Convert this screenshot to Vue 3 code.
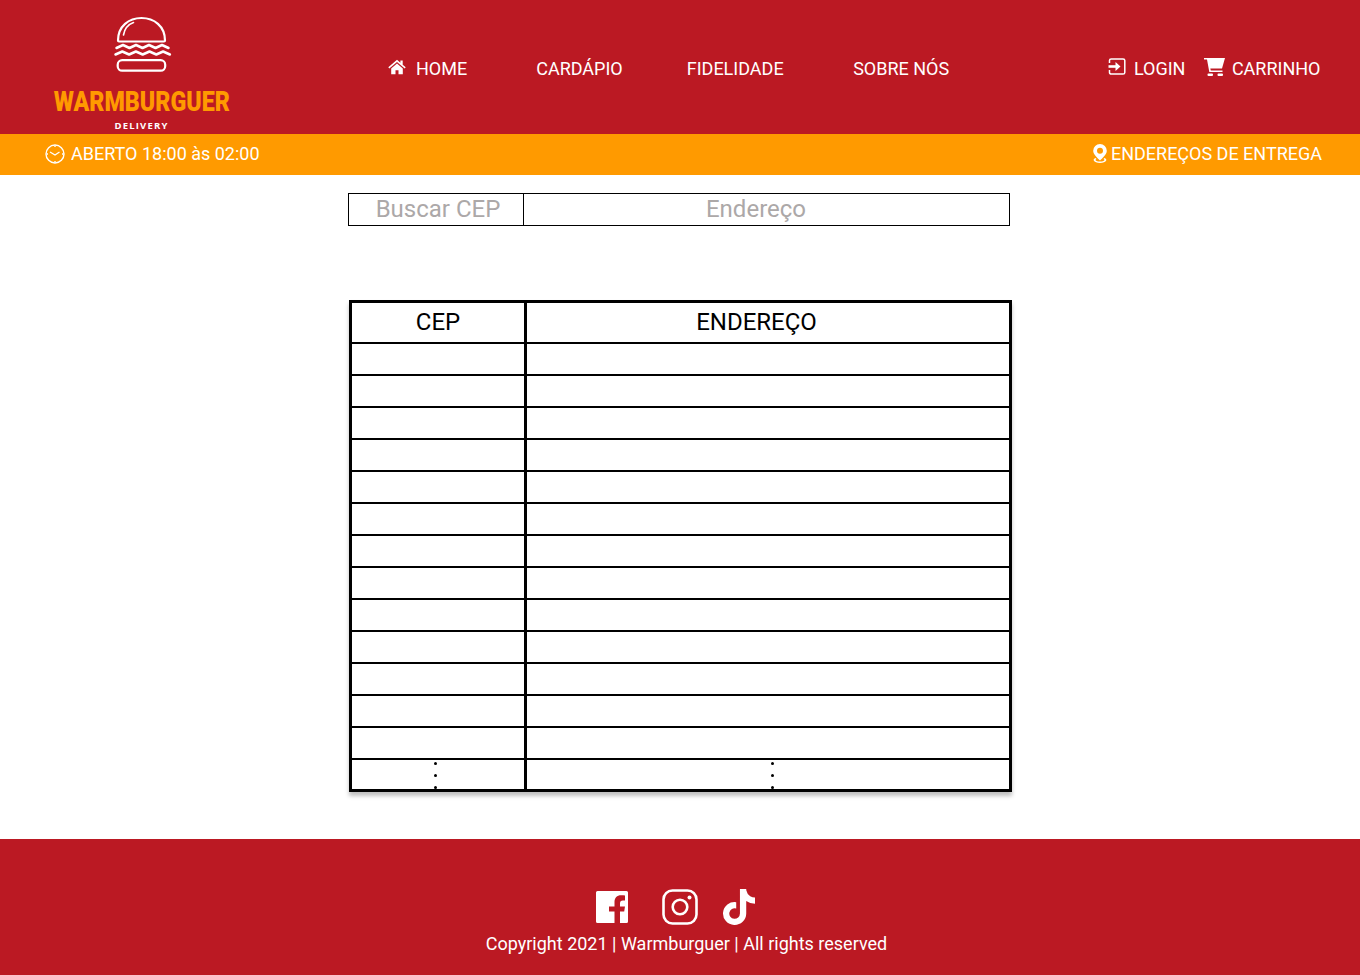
<template>
  <div class="page">
    <header class="topbar">
      <div class="logo">
        <svg class="burger" width="60" height="60" viewBox="0 0 60 60" fill="none" stroke="#fff" stroke-width="2.2">
          <path d="M5 25.5C5 11 16 3 28.5 3S52 11 52 25.5c0 .8-.5 1-1 1H6c-.5 0-1-.2-1-1z" />
          <path d="M10.500 20C11.500 14 15 9.500 20.500 7.500" stroke-width="1.6" stroke-linecap="round" />
          <path d="M3.500 33l6.500-3 6.500 3 6.500-3 6.500 3 6.500-3 6.500 3 6.500-3 6.500 3" stroke-width="2.500" stroke-linecap="round" stroke-linejoin="round" />
          <path d="M2.500 39.500l6.800-3 6.800 3 6.800-3 6.800 3 6.800-3 6.800 3 6.800-3 6.800 3" stroke-width="2.500" stroke-linecap="round" stroke-linejoin="round" />
          <rect x="4.700" y="45.200" width="47.500" height="10.500" rx="4.500" />
        </svg>
        <span class="brand">WARMBURGUER</span>
        <span class="delivery">DELIVERY</span>
      </div>

      <nav class="menu">
        <a class="link home">
          <svg width="18" height="16" viewBox="0 0 18 16" fill="#fff">
            <path d="M9 .8L.3 8.300l1 1.100L9 2.900l7.700 6.500 1-1.100-3-2.600V1.500h-2.300v2.300z" />
            <path d="M3.200 9.500L9 4.600l5.800 4.900v5.700h-4.300v-4h-3v4H3.200z" />
          </svg>
          HOME
        </a>
        <a class="link cardapio">CARDÁPIO</a>
        <a class="link fidelidade">FIDELIDADE</a>
        <a class="link sobre">SOBRE NÓS</a>
      </nav>

      <div class="account">
        <a class="link login">
          <svg width="18" height="17" viewBox="0 0 18 17" fill="none" stroke="#fff" stroke-width="1.500">
            <path d="M1.500 5V2.500C1.500 1.500 2.200 1 3.200 1h11.800c1 0 1.800.6 1.800 1.600v11.800c0 1-.8 1.600-1.800 1.600H3.200c-1 0-1.700-.5-1.700-1.500V12" />
            <path d="M.5 8.500h8" stroke-width="2.600" />
            <path d="M7.500 4l5 4.500-5 4.500z" fill="#fff" stroke="none" />
          </svg>
          LOGIN
        </a>
        <a class="link cart">
          <svg width="21" height="18" viewBox="0 0 21 18" fill="#fff">
            <path d="M0 0h21l-3 10.500H6.300l.5 2H18.500V14H5.300L3 1.500H0z" />
            <rect x="3.500" y="15.500" width="5.500" height="2.500" rx="1" />
            <rect x="13.500" y="15.500" width="5.500" height="2.500" rx="1" />
          </svg>
          CARRINHO
        </a>
      </div>
    </header>

    <div class="infobar">
      <span class="hours">
        <svg width="20" height="20" viewBox="0 0 20 20" fill="none" stroke="#fff" stroke-width="1.400">
          <circle cx="10" cy="10" r="9" />
          <path d="M5 8l5 3 4.500-3" stroke-width="1.300" />
          <path d="M10 1.500v1.500M10 17v1.500M1.500 10H3M17 10h1.500" />
        </svg>
        ABERTO 18:00 às 02:00
      </span>
      <span class="places">
        <svg width="14" height="19" viewBox="0 0 14 19" fill="#fff">
          <path fill-rule="evenodd" d="M7 0a6.800 6.800 0 0 1 6.800 6.800C13.800 10.500 9.500 14 7 16.500 4.500 14 .2 10.500.2 6.800A6.800 6.800 0 0 1 7 0zm0 3.800a3 3 0 1 0 0 6 3 3 0 0 0 0-6z" />
          <path d="M2.500 14c-1.500.8-2.200 1.500-1.700 2.500.6 1.200 3.200 2.500 6.200 2.500s5.600-1.300 6.200-2.500c.5-1-.2-1.700-1.700-2.500l-1 1c.8.500 1.200.9.900 1.300-.5.800-2.200 1.300-4.400 1.300s-3.900-.5-4.400-1.300c-.3-.4.1-.8.900-1.300z" />
        </svg>
        ENDEREÇOS DE ENTREGA
      </span>
    </div>

    <main class="content">
      <form class="search">
        <input class="field cep" type="text" placeholder="Buscar CEP" />
        <input class="field address" type="text" placeholder="Endereço" />
      </form>

      <table class="list">
        <thead>
          <tr>
            <th class="col-cep">CEP</th>
            <th class="col-address"><span class="shift">ENDEREÇO</span></th>
          </tr>
        </thead>
        <tbody>
          <tr v-for="n in emptyRows" :key="n">
            <td class="col-cep"></td>
            <td class="col-address"></td>
          </tr>
          <tr class="more">
            <td class="col-cep">
              <div class="dots dots-cep"><i></i><i></i><i></i></div>
            </td>
            <td class="col-address">
              <div class="dots dots-address"><i></i><i></i><i></i></div>
            </td>
          </tr>
        </tbody>
      </table>
    </main>

    <footer class="footer">
      <div class="social">
        <svg class="fb" width="32" height="32" viewBox="0 0 32 32" fill="#fff">
          <path fill-rule="evenodd" d="M1.500 0h29A1.500 1.500 0 0 1 32 1.500v29a1.500 1.500 0 0 1-1.500 1.500H24V20.500h4.200l.8-5H24v-3c0-1.800.8-3 3-3h2v-5c-1-.1-2.500-.3-4-.3-4 0-6.500 2.500-6.500 6.800v4.500H13v5h5.500V32H1.500A1.500 1.500 0 0 1 0 30.500v-29A1.500 1.500 0 0 1 1.500 0z" />
        </svg>
        <svg class="insta" width="36" height="36" viewBox="0 0 36 36" fill="none" stroke="#fff" stroke-width="2.600">
          <rect x="1.500" y="1.500" width="33" height="33" rx="9" />
          <circle cx="18" cy="18" r="7.300" />
          <circle cx="27.500" cy="8.500" r="2" fill="#fff" stroke="none" />
        </svg>
        <svg class="tiktok" width="32" height="36" viewBox="0 0 448 512" fill="#fff" preserveAspectRatio="none">
          <path d="M448 209.910a210.060 210.060 0 0 1-122.770-39.250V349.380A162.550 162.550 0 1 1 185 188.310V278.200a74.620 74.620 0 1 0 52.230 71.180V0l88 0a121.180 121.180 0 0 0 1.860 22.170h0A122.180 122.180 0 0 0 381 102.390a121.430 121.430 0 0 0 67 20.140z" />
        </svg>
      </div>
      <p class="copyright">Copyright 2021 | Warmburguer | All rights reserved</p>
    </footer>
  </div>
</template>

<script setup>
// 13 linhas vazias, a última linha só tem os pontinhos
const emptyRows = 13
</script>

<style>
html,
body {
  margin: 0;
  background: #fff;
}
</style>

<style scoped>
.page {
  font-family: Roboto, "Liberation Sans", sans-serif;
  color: #fff;
}

.topbar {
  display: flex;
  height: 134px;
  background: #bb1923;
  font-size: 18px;
}

.logo {
  display: flex;
  flex-direction: column;
  align-items: center;
  width: 177px;
  margin-left: 53px;
  padding-top: 15px;
  box-sizing: border-box;
}

.burger {
  display: block;
  margin-left: 3px;
}

.brand {
  margin-top: 13px;
  color: #ff9a00;
  font-size: 24.500px;
  line-height: 28px;
  font-weight: 900;
  white-space: nowrap;
  transform: scale(0.95, 1.15);
}

.delivery {
  margin-top: 4px;
  font-size: 9.500px;
  line-height: 12px;
  font-weight: 700;
  letter-spacing: 1.200px;
  font-family: "Open Sans", sans-serif;
}

.menu,
.account {
  display: flex;
  align-items: center;
  height: 134px;
  padding-top: 2px;
  box-sizing: border-box;
}

.menu {
  margin-left: 158px;
}

.account {
  margin-left: auto;
  padding-right: 39.500px;
}

.link {
  display: flex;
  align-items: center;
  white-space: nowrap;
}

.home svg {
  margin-right: 10px;
  margin-top: -2px;
}

.cardapio {
  margin-left: 69px;
}

.fidelidade {
  margin-left: 64px;
}

.sobre {
  margin-left: 69.500px;
}

.login svg {
  margin-right: 8px;
  margin-top: -3px;
}

.cart {
  margin-left: 18.500px;
}

.cart svg {
  margin-right: 7px;
  margin-top: -2px;
}

.infobar {
  display: flex;
  justify-content: space-between;
  align-items: center;
  box-sizing: border-box;
  height: 41px;
  padding: 0 38px 2px 45px;
  background: #ff9a00;
  font-size: 18px;
}

.hours,
.places {
  display: flex;
  align-items: center;
}

.hours svg {
  margin-right: 6px;
}

.places svg {
  margin-right: 4px;
}

.content {
  width: 664px;
  margin: 0 auto;
  padding: 18px 0 47px;
}

.search {
  display: flex;
  width: 662px;
  height: 33px;
}

.field {
  box-sizing: border-box;
  height: 33px;
  padding: 0 0 2px;
  border: 1px solid #000;
  border-radius: 0;
  outline: none;
  background: #fff;
  font-family: inherit;
  font-size: 24px;
  text-align: center;
}

.field::placeholder {
  color: #aca8a8;
  opacity: 1;
}

.cep {
  width: 176px;
  padding-left: 4px;
}

.address {
  width: 487px;
  margin-left: -1px;
  padding-right: 21px;
}

.list {
  box-sizing: border-box;
  width: 663px;
  margin: 74px 0 0 1px;
  border: 3px solid #000;
  border-collapse: separate;
  border-spacing: 0;
  table-layout: fixed;
  color: #000;
  box-shadow: 0 4px 4px rgba(0, 0, 0, 0.25);
}

.list th,
.list td {
  padding: 0;
  height: 32px;
  box-sizing: border-box;
  border-bottom: 2px solid #000;
}

.list th {
  height: 41px;
  padding-bottom: 2px;
  font-size: 24px;
  font-weight: 400;
}

.col-cep {
  width: 175px;
  border-right: 3px solid #000;
}

.shift {
  display: block;
  padding-right: 23px;
}

.list .more td {
  height: 29px;
  border-bottom: 0;
  vertical-align: top;
}

.dots {
  display: flex;
  flex-direction: column;
  gap: 9px;
  padding-top: 2px;
  height: 27px;
  overflow: hidden;
}

.dots i {
  display: block;
  width: 3px;
  height: 3px;
  border-radius: 50%;
  background: #000;
}

.dots-cep {
  padding-left: 82px;
}

.dots-address {
  padding-left: 244px;
}

.footer {
  display: flex;
  flex-direction: column;
  align-items: center;
  height: 136px;
  box-sizing: border-box;
  padding-top: 50px;
  background: #bb1923;
}

.social {
  display: flex;
  align-items: center;
  margin-right: 10px;
}

.insta {
  margin-left: 34px;
}

.tiktok {
  margin-left: 25px;
}

.copyright {
  margin: 8px 0 0 13px;
  font-size: 18px;
  line-height: 21px;
}
</style>
